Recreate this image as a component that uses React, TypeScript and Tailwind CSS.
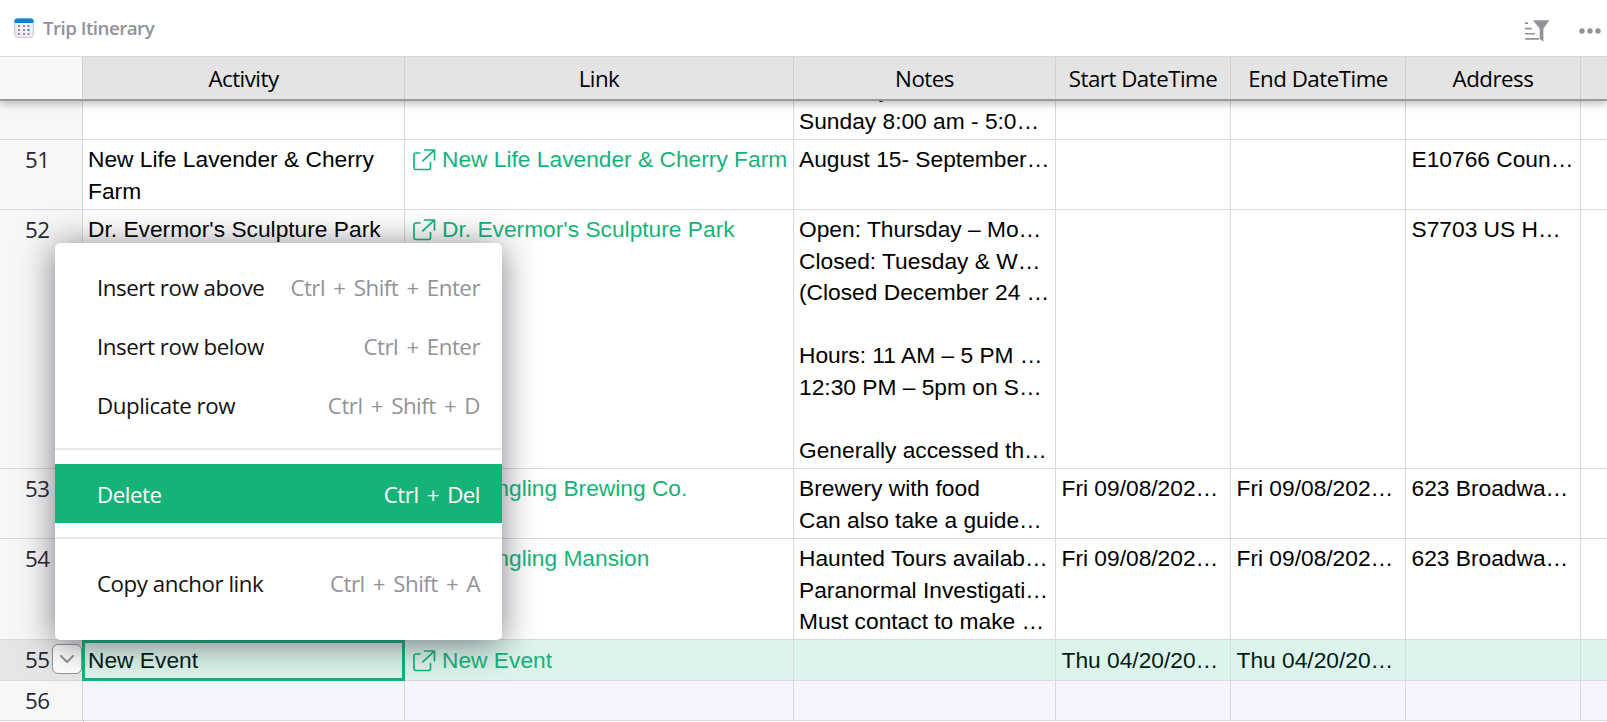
import React from "react";

const ui = "font-['Open_Sans','Noto_Sans',sans-serif]";
const colW = ["w-[322px]", "w-[389px]", "w-[262px]", "w-[175px]", "w-[175px]", "w-[175px]"];

const headers = ["Activity", "Link", "Notes", "Start DateTime", "End DateTime", "Address"];

type Row = {
  id: string;
  height: string;
  tone?: "selected" | "new";
  activity?: string[];
  link?: string;
  notes?: string[];
  start?: string;
  end?: string;
  address?: string;
};

const rows: Row[] = [
  { id: "51", height: "h-[70px]", activity: ["New Life Lavender & Cherry", "Farm"], link: "New Life Lavender & Cherry Farm", notes: ["August 15- September…"], address: "E10766 Coun…" },
  {
    id: "52", height: "h-[259px]", activity: ["Dr. Evermor's Sculpture Park"], link: "Dr. Evermor's Sculpture Park",
    notes: ["Open: Thursday – Mo…", "Closed: Tuesday & W…", "(Closed December 24 …", "", "Hours: 11 AM – 5 PM …", "12:30 PM – 5pm on S…", "", "Generally accessed th…"],
    address: "S7703 US H…",
  },
  { id: "53", height: "h-[70px]", link: "Al. Ringling Brewing Co.", notes: ["Brewery with food", "Can also take a guide…"], start: "Fri 09/08/202…", end: "Fri 09/08/202…", address: "623 Broadwa…" },
  { id: "54", height: "h-[101px]", link: "Al. Ringling Mansion", notes: ["Haunted Tours availab…", "Paranormal Investigati…", "Must contact to make …"], start: "Fri 09/08/202…", end: "Fri 09/08/202…", address: "623 Broadwa…" },
  { id: "55", height: "h-[41px]", tone: "selected", activity: ["New Event"], link: "New Event", start: "Thu 04/20/20…", end: "Thu 04/20/20…" },
  { id: "56", height: "h-[40px]", tone: "new" },
];

function LinkIcon() {
  return (
    <svg className="mt-[5px] h-[23px] w-[23px] shrink-0" viewBox="0 0 23 23" fill="none" stroke="#16b378" strokeWidth="1.700" strokeLinecap="round" strokeLinejoin="round">
      <path d="M6.800 4H2.800A1.800 1.800 0 0 0 1 5.800v13A1.800 1.800 0 0 0 2.800 20.500h12.900a1.800 1.800 0 0 0 1.800-1.800v-5.200" />
      <path d="M11.500 1H21.500V10.800M21.300 1.200L9.800 11.800" />
    </svg>
  );
}

function Lines({ items }: { items?: string[] }) {
  return (
    <>
      {(items ?? []).map((t, i) => (
        <div key={i} className="h-[31.5px] whitespace-pre">{t}</div>
      ))}
    </>
  );
}

function RecordRow({ row }: { row: Row }) {
  const selected = row.tone === "selected";
  const bg = selected ? "bg-[#dcf4eb] text-[#031b12]" : row.tone === "new" ? "bg-[#f5f5ff]" : "bg-white";
  const numBg = selected ? "bg-[#e5e5e5]" : "bg-[#f7f7f7]";
  const cell = `shrink-0 border-r border-[#d9d9d9] ${selected ? "pt-[5px]" : "pt-[4px]"}`;
  return (
    <div className={`flex border-b border-[#d9d9d9] ${row.height} ${bg}`}>
      <div className={`flex w-[83px] shrink-0 justify-between border-r border-[#d9d9d9] pl-[25px] ${numBg}`}>
        <span className={`pt-[4px] text-[22.3px] tracking-[-0.6px] text-[#262633] ${ui}`}>{row.id}</span>
        {selected && (
          <span className="mt-1 flex h-[30px] w-[30px] items-center justify-center rounded-[6px] border border-[#929299] bg-white">
            <svg className="h-4 w-4" viewBox="0 0 16 16" fill="none" stroke="#929299" strokeWidth="2" strokeLinecap="round" strokeLinejoin="round">
              <path d="M2 5l6 6 6-6" />
            </svg>
          </span>
        )}
      </div>
      <div className={`relative pl-[5px] ${cell} ${colW[0]}`}>
        <Lines items={row.activity} />
        {selected && <span className="absolute -bottom-px -left-px -right-px top-0 border-3 border-[#16b378]" />}
      </div>
      <div className={`${cell} ${colW[1]} flex gap-[6px] pl-[5px] text-[#16b378]`}>
        {row.link && (
          <>
            <span className="ml-[3px]"><LinkIcon /></span>
            <span className="whitespace-pre">{row.link}</span>
          </>
        )}
      </div>
      <div className={`pl-[5px] ${cell} ${colW[2]}`}><Lines items={row.notes} /></div>
      <div className={`pl-[5.5px] ${cell} ${colW[3]}`}>{row.start}</div>
      <div className={`pl-[5.5px] ${cell} ${colW[4]}`}>{row.end}</div>
      <div className={`pl-[5.5px] ${cell} ${colW[5]}`}>{row.address}</div>
    </div>
  );
}

function MenuItem({ label, keys, active }: { label: string; keys: string; active?: boolean }) {
  return (
    <div className={`flex h-[59px] items-center justify-between pl-[42px] pr-[22px] pt-[2px] ${active ? "bg-[#16b378] text-white" : "text-[#111111]"}`}>
      <span className="tracking-[-0.450px]">{label}</span>
      <span className={`[word-spacing:2.900px] ${active ? "" : "text-[#929299]"}`}>{keys}</span>
    </div>
  );
}

function ContextMenu() {
  return (
    <div className={`absolute left-[55px] top-[243px] h-[397px] w-[447px] rounded-[5px] bg-white pt-[14px] text-[22.3px] tracking-[-0.5px] shadow-[0_3.5px_35px_rgba(38,38,51,0.6)] ${ui}`}>
      <MenuItem label="Insert row above" keys="Ctrl + Shift + Enter" />
      <MenuItem label="Insert row below" keys="Ctrl + Enter" />
      <MenuItem label="Duplicate row" keys="Ctrl + Shift + D" />
      <div className="my-[14px] h-[2px] bg-[#e8e8e8]" />
      <MenuItem label="Delete" keys="Ctrl + Del" active />
      <div className="my-[14px] h-[2px] bg-[#e8e8e8]" />
      <MenuItem label="Copy anchor link" keys="Ctrl + Shift + A" />
    </div>
  );
}

export default function App() {
  return (
    <div className="relative h-[722px] w-[1607px] overflow-hidden bg-white font-['Liberation_Sans',Arial,sans-serif] text-[22.75px] leading-[31.5px] text-black">
      <header className="flex h-14 items-center justify-between pl-[14px] pr-[6px]">
        <div className="flex items-center gap-[9px]">
          <svg className="h-5 w-5" viewBox="0 0 20 20">
            <rect x="0.7" y="0.7" width="18.6" height="18.6" rx="3" fill="#f3eef8" stroke="#c4bfd0" strokeWidth="1" />
            <path d="M0.4 5V3.2A2.8 2.8 0 0 1 3.2.4h13.6a2.8 2.8 0 0 1 2.8 2.8V5z" fill="#0b86d6" />
            <g fill="#8f8a9c">
              <rect x="4" y="7" width="2" height="2" /><rect x="9" y="7" width="2" height="2" /><rect x="13.500" y="7" width="2" height="2" />
              <rect x="4" y="11" width="2" height="2" /><rect x="9" y="11" width="2" height="2" />
              <rect x="4" y="15" width="2" height="2" /><rect x="9" y="15" width="2" height="2" /><rect x="13.500" y="15" width="2" height="2" />
            </g>
            <rect x="13.500" y="11" width="2" height="2" fill="#0b86d6" />
          </svg>
          <span className={`pt-[2px] text-[18.8px] font-semibold tracking-[-0.55px] text-[#929299] ${ui}`}>Trip Itinerary</span>
        </div>
        <div className="flex items-center gap-[30px] pt-[6px]">
          <svg className="h-6 w-6 overflow-visible" viewBox="0 0 24 24" fill="#929299">
            <path d="M8 1.300h16.400l-6 8.500v12.800l-3.700-2.400V9.800z" />
            <path d="M0 3.200h3v1.700H0zM0 8.800h6.700v1.700H0zM0 13.900h10v1.700H0zM0 19.100h14v1.700H0z" />
          </svg>
          <svg className="h-6 w-[22px]" viewBox="0 0 22 24" fill="#929299">
            <circle cx="3" cy="12" r="2.700" /><circle cx="11" cy="12" r="2.700" /><circle cx="19" cy="12" r="2.700" />
          </svg>
        </div>
      </header>

      <div className={`relative flex h-[45px] border-b-2 border-t border-b-[#999b99] border-t-[#d9d9d9] bg-[#e4e4e4] text-[22.3px] tracking-[-0.5px] shadow-[0_3px_8px_rgba(0,0,0,0.25)] [clip-path:inset(0_0_-16px_0)] ${ui}`}>
        <div className="w-[83px] shrink-0 border-r border-[#d0d0d0] bg-[#f7f7f7]" />
        {headers.map((h, i) => (
          <div key={h} className={`flex shrink-0 items-center justify-center border-r border-[#d0d0d0] pt-px ${colW[i]}`}>{h}</div>
        ))}
      </div>

      <div className="flex h-[39px] border-b border-[#d9d9d9]">
        <div className="w-[83px] shrink-0 border-r border-[#d9d9d9] bg-[#f7f7f7]" />
        <div className={`shrink-0 border-r border-[#d9d9d9] ${colW[0]}`} />
        <div className={`shrink-0 border-r border-[#d9d9d9] ${colW[1]}`} />
        <div className={`flex shrink-0 flex-col justify-end overflow-hidden border-r border-[#d9d9d9] pb-[2px] pl-[5px] ${colW[2]}`}>
          <Lines items={["Saturday 8:00 am…", "Sunday 8:00 am - 5:0…"]} />
        </div>
        <div className={`shrink-0 border-r border-[#d9d9d9] ${colW[3]}`} />
        <div className={`shrink-0 border-r border-[#d9d9d9] ${colW[4]}`} />
        <div className={`shrink-0 border-r border-[#d9d9d9] ${colW[5]}`} />
      </div>

      {rows.map((r) => <RecordRow key={r.id} row={r} />)}
      <div className="h-px w-[84px] border-r border-[#d9d9d9] bg-[#f7f7f7]" />
      <ContextMenu />
    </div>
  );
}
